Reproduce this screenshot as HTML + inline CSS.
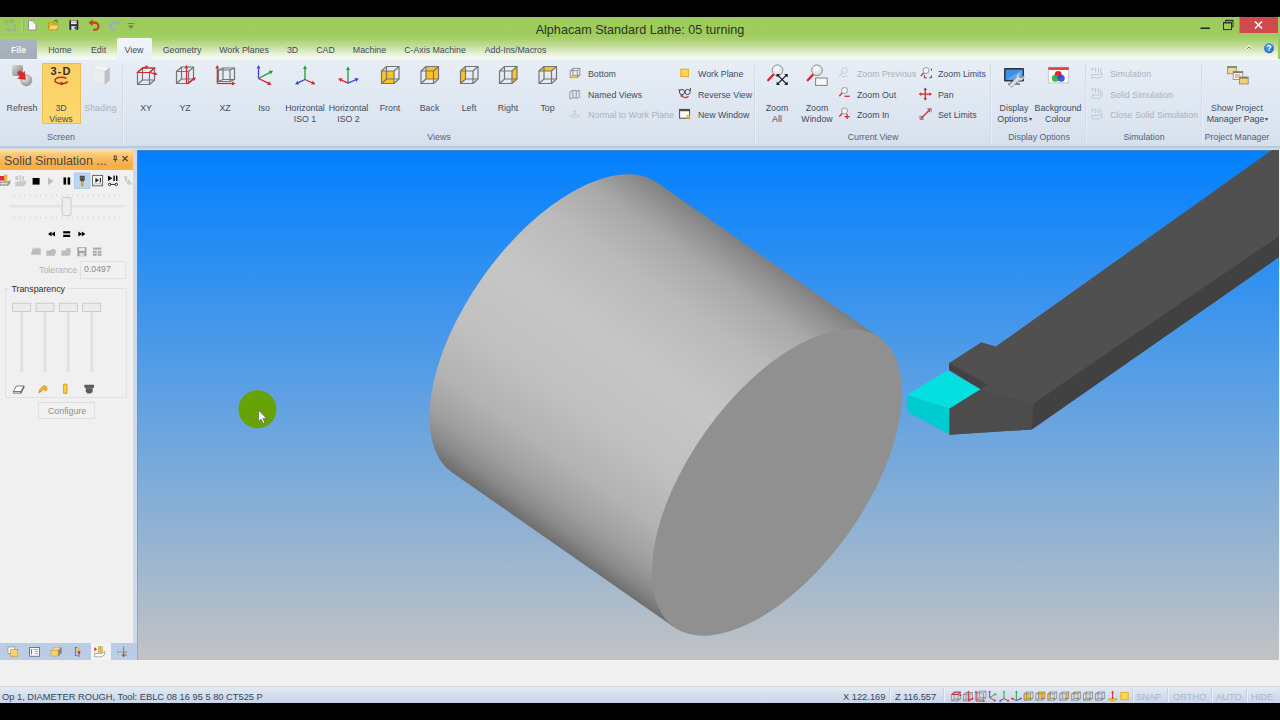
<!DOCTYPE html>
<html lang="en">
<head>
<meta charset="utf-8">
<title>Alphacam Standard Lathe: 05 turning</title>
<style>
html,body{margin:0;padding:0;}
body{width:1280px;height:720px;overflow:hidden;position:relative;background:#000;font-family:"Liberation Sans",sans-serif;font-size:8.8px;color:#3b4a5e;}
.abs{position:absolute;}
#titlebar{left:0;top:17px;width:1280px;height:43px;background:linear-gradient(to bottom,#9dcb5b 0px,#9fcc5f 18px,#a8d06d 22px,#c2dd98 29px,#e3efd2 36px,#f6faf1 41px,#f4f7f4 43px);}
#rightedge{left:1278px;top:17px;width:2px;height:42px;background:#9dcb5b;}
#title{left:0;width:1280px;top:22.5px;text-align:center;font-size:12.6px;color:#2a3620;}
#ribbon{left:0;top:60px;width:1280px;height:86px;background:linear-gradient(to bottom,#e8eef6 0,#e1e9f3 30px,#dce5f0 60px,#d6e0ec 86px);}
#ribbonline{left:0;top:146px;width:1280px;height:4px;background:linear-gradient(to bottom,#b4c1d4 0,#c3cfdf 40%,#d3dde9 100%);}
.tab{position:absolute;top:45px;font-size:8.8px;line-height:11px;color:#3e4c60;white-space:nowrap;transform:translateX(-50%);}
#filetab{left:0;top:38.5px;width:37px;height:20.5px;background:linear-gradient(#aab5c2,#a3aebb);color:#f4f6f8;font-size:8.8px;font-weight:bold;text-align:center;line-height:22px;}
#viewtab{left:117px;top:38px;width:35px;height:23px;background:linear-gradient(#f2f6fb,#e9eff7);border-radius:2px 2px 0 0;}
.big{position:absolute;top:103px;font-size:8.8px;line-height:11px;text-align:center;white-space:nowrap;transform:translateX(-50%);color:#3e4c60;}
.sm{position:absolute;font-size:8.8px;line-height:11px;white-space:nowrap;color:#3e4c60;}
.dis{color:#a9b2be;}
.grp{position:absolute;top:131.5px;font-size:8.8px;line-height:11px;white-space:nowrap;transform:translateX(-50%);color:#53617a;}
.sep{position:absolute;top:64px;width:1px;height:80px;background:#d2dbe8;box-shadow:1px 0 0 #e9eff7;}
#btn3d{left:42px;top:63px;width:39px;height:61px;background:linear-gradient(#fbd166,#fdd870);border:1px solid #ebbd52;box-sizing:border-box;}
#leftbg{left:0;top:150px;width:137px;height:510px;background:#cfdae8;}
#panel{left:0;top:149px;width:133px;height:494px;background:#f0f0f0;overflow:hidden;}
#phead{left:0;top:0;width:133px;height:21px;background:linear-gradient(to bottom,#fde3ae 0,#fcc66f 30%,#f9ad45 75%,#f9b04c 100%);}
#ptitle{left:4px;top:4.5px;font-size:12.4px;line-height:15px;color:#4a4a4a;white-space:nowrap;}
#ptabs{left:0;top:643px;width:137px;height:17px;background:#bccbe6;}
#ptabact{left:91px;top:643px;width:20px;height:17px;background:#f3f4f7;}
.ptxt{position:absolute;font-size:8.8px;line-height:11px;white-space:nowrap;}
#vp{left:137px;top:150px;}
#vpright{left:1279px;top:150px;width:1px;height:510px;background:#f4f6f8;}
#under{left:0;top:660px;width:1280px;height:27px;background:#f0f0f0;}
#statusline{left:0;top:686px;width:1280px;height:1px;background:#d3d6de;}
#status{left:0;top:687px;width:1280px;height:16px;background:linear-gradient(to bottom,#e4ebf5 0,#d5dfed 50%,#c8d5e7 100%);}
.st{position:absolute;top:692px;font-size:9.3px;line-height:11px;color:#37455a;white-space:nowrap;}
.stsep{position:absolute;top:688px;width:1px;height:14px;background:#c6d1e2;box-shadow:1px 0 0 #eaf0f8;}
#botblack{left:0;top:703px;width:1280px;height:17px;background:#000;}
</style>

</head>
<body>
<div id="titlebar" class="abs"></div>
<div id="rightedge" class="abs"></div>
<div id="title" class="abs">Alphacam Standard Lathe: 05 turning</div>
<div id="filetab" class="abs">File</div>
<div id="viewtab" class="abs"></div>
<div id="ribbon" class="abs"></div>
<div id="ribbonline" class="abs"></div>

<!-- TABS -->
<div class="tab" style="left:60px">Home</div>
<div class="tab" style="left:98.5px">Edit</div>
<div class="tab" style="left:134px">View</div>
<div class="tab" style="left:182px">Geometry</div>
<div class="tab" style="left:244px">Work Planes</div>
<div class="tab" style="left:292.5px">3D</div>
<div class="tab" style="left:325.5px">CAD</div>
<div class="tab" style="left:369.5px">Machine</div>
<div class="tab" style="left:435px">C-Axis Machine</div>
<div class="tab" style="left:515.5px">Add-Ins/Macros</div>

<!-- RIBBON -->
<div id="btn3d" class="abs"></div>
<div class="big" style="left:22px">Refresh</div>
<div class="big" style="left:61px">3D<br>Views</div>
<div class="big dis" style="left:100.5px">Shading</div>
<div class="big" style="left:146px">XY</div>
<div class="big" style="left:185px">YZ</div>
<div class="big" style="left:225px">XZ</div>
<div class="big" style="left:264px">Iso</div>
<div class="big" style="left:305px">Horizontal<br>ISO 1</div>
<div class="big" style="left:348.5px">Horizontal<br>ISO 2</div>
<div class="big" style="left:390px">Front</div>
<div class="big" style="left:429.5px">Back</div>
<div class="big" style="left:469px">Left</div>
<div class="big" style="left:508px">Right</div>
<div class="big" style="left:547.5px">Top</div>
<div class="big" style="left:777px">Zoom<br>All</div>
<div class="big" style="left:817px">Zoom<br>Window</div>
<div class="big" style="left:1014px">Display<br>Options<span style="font-size:6px;position:relative;top:-1.5px;left:1px">&#9662;</span></div>
<div class="big" style="left:1058px">Background<br>Colour</div>
<div class="big" style="left:1237px">Show Project<br>Manager Page<span style="font-size:6px;position:relative;top:-1.5px;left:1px">&#9662;</span></div>

<div class="sm" style="left:588px;top:69px">Bottom</div>
<div class="sm" style="left:588px;top:90px">Named Views</div>
<div class="sm dis" style="left:588px;top:110px">Normal to Work Plane</div>
<div class="sm" style="left:698px;top:69px">Work Plane</div>
<div class="sm" style="left:698px;top:90px">Reverse View</div>
<div class="sm" style="left:698px;top:110px">New Window</div>
<div class="sm dis" style="left:857px;top:69px">Zoom Previous</div>
<div class="sm" style="left:857px;top:90px">Zoom Out</div>
<div class="sm" style="left:857px;top:110px">Zoom In</div>
<div class="sm" style="left:938px;top:69px">Zoom Limits</div>
<div class="sm" style="left:938px;top:90px">Pan</div>
<div class="sm" style="left:938px;top:110px">Set Limits</div>
<div class="sm dis" style="left:1110px;top:69px">Simulation</div>
<div class="sm dis" style="left:1110px;top:90px">Solid Simulation</div>
<div class="sm dis" style="left:1110px;top:110px">Close Solid Simulation</div>

<div class="grp" style="left:61px">Screen</div>
<div class="grp" style="left:439px">Views</div>
<div class="grp" style="left:873px">Current View</div>
<div class="grp" style="left:1039px">Display Options</div>
<div class="grp" style="left:1144px">Simulation</div>
<div class="grp" style="left:1237px">Project Manager</div>

<div class="sep" style="left:122px"></div>
<div class="sep" style="left:754px"></div>
<div class="sep" style="left:990px"></div>
<div class="sep" style="left:1085px"></div>
<div class="sep" style="left:1201px"></div>

<!-- PANEL -->
<div id="leftbg" class="abs"></div>
<div id="panel" class="abs">
  <div id="phead" class="abs"></div>
  <div id="ptitle" class="abs">Solid Simulation ...</div>
  <div class="ptxt" style="left:39px;top:116px;color:#b2b2b2">Tolerance</div>
  <div class="abs" style="left:80px;top:112px;width:46px;height:18px;box-sizing:border-box;border:1px solid #e2e2e2;background:#f1f1f1"></div>
  <div class="ptxt" style="left:84px;top:115px;color:#8c8c8c">0.0497</div>
  <div class="abs" style="left:5px;top:139px;width:122px;height:110px;box-sizing:border-box;border:1px solid #e1e1e1"></div>
  <div class="ptxt" style="left:9px;top:134.5px;color:#2e2e2e;background:#f0f0f0;padding:0 2.5px">Transparency</div>
  <div class="abs" style="left:38px;top:253px;width:57px;height:17px;box-sizing:border-box;border:1px solid #dedede;background:#f1f1f1"></div>
  <div class="ptxt" style="left:48px;top:257px;color:#8e8e8e">Configure</div>
</div>
<div id="ptabs" class="abs"></div>
<div id="ptabact" class="abs"></div>

<!-- VIEWPORT -->
<svg id="vp" class="abs" width="1142" height="510" viewBox="137 150 1142 510">
  <defs>
    <linearGradient id="sky" x1="0" y1="0" x2="0" y2="1">
      <stop offset="0" stop-color="#0280ff"/>
      <stop offset="1" stop-color="#c2c3c4"/>
    </linearGradient>
<!--CYLGRAD-->
    <linearGradient id="cyl" gradientUnits="userSpaceOnUse" x1="879.8" y1="337.8" x2="674.2" y2="627.2">
      <stop offset="0" stop-color="#7e7e7e"/>
      <stop offset="0.04" stop-color="#8e8e8e"/>
      <stop offset="0.12" stop-color="#a8a8a8"/>
      <stop offset="0.25" stop-color="#bababa"/>
      <stop offset="0.45" stop-color="#c6c6c6"/>
      <stop offset="0.65" stop-color="#c0c0c0"/>
      <stop offset="0.8" stop-color="#b2b2b2"/>
      <stop offset="0.9" stop-color="#9e9e9e"/>
      <stop offset="0.96" stop-color="#888888"/>
      <stop offset="1" stop-color="#707070"/>
    </linearGradient>
<!--/CYLGRAD-->
  </defs>
  <rect x="137" y="150" width="1142" height="510" fill="url(#sky)"/>
  <rect x="137" y="150" width="1142" height="1" fill="#6f86a6" fill-opacity="0.55"/><rect x="137" y="150" width="1" height="510" fill="#6f86a6" fill-opacity="0.45"/>
<!--CYL-->
  <g id="cylinder">
    <path d="M879.8 337.8 L657.3 182.8 A177.5 88.0 -54.6 0 0 451.7 472.2 L674.2 627.2 Z" fill="url(#cyl)"/>
    <path d="M879.8 337.8 A177.5 88 -54.6 0 0 674.2 627.2 A177.5 88 -54.6 0 0 879.8 337.8 Z" fill="#909090"/>
  </g>
<!--/CYL-->
  <g id="tool">
    <polygon points="949.2,362.9 981.3,342.2 995.8,346.5 1280,144.3 1280,256.4 1031.7,429.4 949.2,434.7 949.2,408.7 980.5,389.3 949.2,370" fill="#505050"/>
    <polygon points="1033.3,403.4 1280,235.5 1280,256.4 1031.7,429.4" fill="#414141"/>
    <polygon points="949.2,408.7 980.5,389.3 1033.3,403.4 1031.7,429.4 949.2,434.7" fill="#4c4c4c"/>
    <polygon points="949.2,362.9 949.2,370 980.5,389.3 987.5,384.8" fill="#434343"/>
    <polygon points="906.9,395 947.2,370.6 980.5,389.3 949.4,408.4" fill="#04dfe0"/>
    <polygon points="906.9,395 949.4,408.4 949.4,434.4 907.8,411.9" fill="#00cbd0"/>
  </g>
  <g id="cursor">
    <circle cx="257.5" cy="409.3" r="19" fill="#68a306"/>
    <path d="M258.6 410.2 l0 11.4 l2.6 -2.5 l1.9 4.4 l1.7 -0.8 l-1.9 -4.3 l3.6 0 z" fill="#fff" stroke="#444" stroke-width="0.5"/>
  </g>
</svg>

<div id="vpright" class="abs"></div>
<div id="under" class="abs"></div>
<div id="statusline" class="abs"></div>
<div id="status" class="abs"></div>
<div class="st" style="left:2px">Op 1, DIAMETER ROUGH, Tool: EBLC 08 16 95 5 80 CT525 P</div>
<div class="st" style="left:843px">X 122.169</div>
<div class="st" style="left:895px">Z 116.557</div>
<div class="st" style="left:1136px;color:#a9b7cb">SNAP</div>
<div class="st" style="left:1173px;color:#a9b7cb">ORTHO</div>
<div class="st" style="left:1216px;color:#a9b7cb">AUTO</div>
<div class="st" style="left:1251px;color:#a9b7cb">HIDE</div>
<div class="stsep" style="left:889px"></div>
<div class="stsep" style="left:943px"></div>
<div class="stsep" style="left:1132px"></div>
<div class="stsep" style="left:1167px"></div>
<div class="stsep" style="left:1211px"></div>
<div class="stsep" style="left:1246px"></div>
<div id="botblack" class="abs"></div>
<!--ICONS-->
<svg id="icons" class="abs" style="left:0;top:0" width="1280" height="720" viewBox="0 0 1280 720">
<defs>
<linearGradient id="gGrey" x1="0" y1="0" x2="1" y2="1"><stop offset="0" stop-color="#dcdcdc"/><stop offset="1" stop-color="#7c7c7c"/></linearGradient>
<radialGradient id="gSph" cx="0.35" cy="0.3" r="0.8"><stop offset="0" stop-color="#f2f2f2"/><stop offset="1" stop-color="#8a8a8a"/></radialGradient>
<radialGradient id="gLens" cx="0.4" cy="0.35" r="0.7"><stop offset="0" stop-color="#ffffff"/><stop offset="1" stop-color="#cfd3d8"/></radialGradient>
<radialGradient id="gHelp" cx="0.4" cy="0.3" r="0.8"><stop offset="0" stop-color="#5aa0ee"/><stop offset="1" stop-color="#1c5fc4"/></radialGradient>
</defs>
<rect x="1239.5" y="17" width="38.5" height="16" fill="#cf494e"/>
<path d="M1255 21.5 L1262 28.5 M1262 21.5 L1255 28.5" stroke="#fff" stroke-width="1.7"/>
<rect x="1200.5" y="27.5" width="9.5" height="1.5" fill="#1e2a12"/>
<path d="M1225.5 21.8 V20.3 H1233 V27 H1231.6" fill="none" stroke="#2a3620" stroke-width="1"/>
<rect x="1225" y="20" width="8.3" height="1.2" fill="#2a3620"/>
<rect x="1223.5" y="22.6" width="8" height="7" fill="none" stroke="#2a3620" stroke-width="1"/>
<rect x="1223" y="22.1" width="9" height="1.3" fill="#2a3620"/>
<path d="M1246 49.6 L1249 46.6 L1252 49.6" fill="none" stroke="#ffffff" stroke-width="2.6" stroke-linejoin="round"/>
<path d="M1246.3 49.5 L1249 46.8 L1251.7 49.5" fill="none" stroke="#55634a" stroke-width="1"/>
<circle cx="1269" cy="48.3" r="5" fill="url(#gHelp)"/>
<text x="1269" y="51.4" font-size="8.5" font-weight="bold" fill="#fff" text-anchor="middle" font-family="Liberation Sans, sans-serif">?</text>
<g opacity="0.55"><path d="M6 26 v-5 h7 l-2 -2 m2 2 l-2 2" fill="none" stroke="#8aa86c" stroke-width="1.6"/><path d="M15 24 v6 h-8 l2 2 m-2 -2 l2 -2" fill="none" stroke="#9aa6a0" stroke-width="1.8"/></g>
<rect x="21.8" y="21" width="1" height="10" fill="#c3dd98"/><rect x="22.8" y="21" width="1" height="10" fill="#8db852"/>
<path d="M28.5 20.5 h5 l2.5 2.5 v7 h-7.5 z" fill="#f6f6f6" stroke="#8c8c8c" stroke-width="0.9"/><path d="M33.5 20.5 v2.5 h2.5" fill="#dcdcdc" stroke="#8c8c8c" stroke-width="0.7"/>
<path d="M48.5 22.5 h3.5 l1 1.2 h4 v6 h-8.5 z" fill="#e9b736" stroke="#b78a1e" stroke-width="0.7"/><path d="M48.5 29.7 l2 -4.6 h8 l-2 4.6 z" fill="#fbd965" stroke="#c79a28" stroke-width="0.7"/><path d="M53.5 21.5 l3 -1.5 l1 2.5" fill="none" stroke="#7a4a20" stroke-width="1"/>
<rect x="69.3" y="20.3" width="9" height="9.6" rx="0.8" fill="#252a40"/><rect x="71" y="20.6" width="5.6" height="3.6" fill="#f4f0f0"/><rect x="71" y="21.6" width="5.6" height="1" fill="#e58c8c"/><rect x="71.3" y="26" width="5" height="3.9" fill="#d8dadf"/><rect x="74.6" y="26.6" width="1.2" height="2.6" fill="#252a40"/>
<path d="M91.5 22.6 h3.4 a3.6 3.6 0 0 1 0 7.2 h-1.8" fill="none" stroke="#d2391c" stroke-width="2.1"/><polygon points="88.6,22.8 92.6,19.6 92.6,26" fill="#d2391c"/>
<path d="M117.6 22.6 h-3.4 a3.6 3.6 0 0 0 0 7.2 h1.8" fill="none" stroke="#93adc9" stroke-width="2.1"/><polygon points="120.5,22.8 116.5,19.6 116.5,26" fill="#93adc9"/>
<rect x="127.5" y="23" width="7" height="1" fill="#6d8b4a"/><polygon points="127.8,25.6 134.2,25.6 131,29" fill="#6d8b4a"/>
<rect x="12" y="65" width="11" height="11" rx="2.2" fill="url(#gGrey)"/>
<circle cx="26.3" cy="80.3" r="5.6" fill="url(#gSph)" stroke="#8e8e8e" stroke-width="0.5"/>
<polygon points="17.5,72.5 20,70.5 22.6,73.2 24.6,71.4 25.6,79.6 17.6,78.4 19.8,76.4" fill="#e0282e" stroke="#b81c22" stroke-width="0.4"/>
<text x="61" y="75.2" font-size="11" font-weight="bold" fill="#3a2d2d" text-anchor="middle" letter-spacing="1.1" font-family="Liberation Sans, sans-serif">3-D</text>
<path d="M66.5 78.3 a6.6 3.3 0 1 0 1.2 3.2" fill="none" stroke="#c3271c" stroke-width="1.5"/>
<polygon points="60.5,81.6 64.8,83.6 60.8,85.4" fill="#c3271c"/>
<polygon points="90.9,67.6 100,65.3 109.9,67.6 104.6,71.2" fill="#f4f4f4" stroke="#dedede" stroke-width="0.4"/>
<polygon points="90.9,67.6 104.6,71.2 104.6,84.9 91.9,80.8" fill="#ececec" stroke="#dcdcdc" stroke-width="0.4"/>
<polygon points="104.6,71.2 109.9,67.6 109.9,80.3 104.6,84.9" fill="#bcc0c7"/>
<polygon points="142.5,68.0 154.5,68.0 154.5,80.0 142.5,80.0" fill="none" stroke="#757575" stroke-width="1.2"/>
<polygon points="137.5,72.5 149.5,72.5 149.5,84.5 137.5,84.5" fill="none" stroke="#757575" stroke-width="1.2"/>
<line x1="137.5" y1="72.5" x2="142.5" y2="68.0" stroke="#757575" stroke-width="1.2" />
<line x1="149.5" y1="72.5" x2="154.5" y2="68.0" stroke="#757575" stroke-width="1.2" />
<line x1="149.5" y1="84.5" x2="154.5" y2="80.0" stroke="#757575" stroke-width="1.2" />
<line x1="137.5" y1="84.5" x2="142.5" y2="80.0" stroke="#757575" stroke-width="1.2" />
<polygon points="137.5,72.5 142.5,68 154.5,68 149.5,72.5" fill="none" stroke="#d8232a" stroke-width="1.1"/>
<line x1="149.5" y1="72.5" x2="154.2" y2="73.68" stroke="#d8232a" stroke-width="1.2" />
<polygon points="157.5,74.5 153.75,75.49 154.66,71.86" fill="#d8232a"/>
<line x1="142.5" y1="68" x2="145.65" y2="66.95" stroke="#d8232a" stroke-width="1.2" />
<polygon points="148.5,66 146.18,68.51 145.13,65.38" fill="#d8232a"/>
<polygon points="181.5,67.0 193.5,67.0 193.5,79.0 181.5,79.0" fill="none" stroke="#757575" stroke-width="1.2"/>
<polygon points="176.5,71.5 188.5,71.5 188.5,83.5 176.5,83.5" fill="none" stroke="#757575" stroke-width="1.2"/>
<line x1="176.5" y1="71.5" x2="181.5" y2="67.0" stroke="#757575" stroke-width="1.2" />
<line x1="188.5" y1="71.5" x2="193.5" y2="67.0" stroke="#757575" stroke-width="1.2" />
<line x1="188.5" y1="83.5" x2="193.5" y2="79.0" stroke="#757575" stroke-width="1.2" />
<line x1="176.5" y1="83.5" x2="181.5" y2="79.0" stroke="#757575" stroke-width="1.2" />
<line x1="186.5" y1="84" x2="186.5" y2="68.6" stroke="#d8232a" stroke-width="1.2" />
<polygon points="186.5,65 188.48,68.6 184.52,68.6" fill="#d8232a"/>
<line x1="186.5" y1="84" x2="193.19" y2="79.42" stroke="#d8232a" stroke-width="1.2" />
<polygon points="196,77.5 194.25,80.96 192.14,77.88" fill="#d8232a"/>
<polygon points="223.0,68 234.5,68 234.5,79.5 223.0,79.5" fill="none" stroke="#757575" stroke-width="1.2"/>
<polygon points="218.5,70 230.0,70 230.0,81.5 218.5,81.5" fill="none" stroke="#757575" stroke-width="1.2"/>
<line x1="218.5" y1="70" x2="223.0" y2="68" stroke="#757575" stroke-width="1.2" />
<line x1="230.0" y1="70" x2="234.5" y2="68" stroke="#757575" stroke-width="1.2" />
<line x1="230.0" y1="81.5" x2="234.5" y2="79.5" stroke="#757575" stroke-width="1.2" />
<line x1="218.5" y1="81.5" x2="223.0" y2="79.5" stroke="#757575" stroke-width="1.2" />
<line x1="217.3" y1="83.5" x2="217.3" y2="68.6" stroke="#d8232a" stroke-width="1.2" />
<polygon points="217.3,65 219.28,68.6 215.32,68.6" fill="#d8232a"/>
<line x1="217.3" y1="83.5" x2="231.9" y2="83.5" stroke="#d8232a" stroke-width="1.2" />
<polygon points="235.5,83.5 231.9,85.48 231.9,81.52" fill="#d8232a"/>
<line x1="258.5" y1="78.5" x2="258.5" y2="68.6" stroke="#3146d8" stroke-width="1.3" />
<polygon points="258.5,65 260.48,68.6 256.52,68.6" fill="#3146d8"/>
<line x1="258.5" y1="78.5" x2="269.64" y2="72.58" stroke="#1fa12b" stroke-width="1.3" />
<polygon points="273,70.8 270.62,74.43 268.66,70.74" fill="#1fa12b"/>
<line x1="258.5" y1="78.5" x2="268.08" y2="83.14" stroke="#d8232a" stroke-width="1.3" />
<polygon points="271.5,84.8 267.17,85.02 268.99,81.26" fill="#d8232a"/>
<line x1="305" y1="79.5" x2="305.0" y2="68.9" stroke="#1fa12b" stroke-width="1.3" />
<polygon points="305,65.3 306.98,68.9 303.02,68.9" fill="#1fa12b"/>
<line x1="305" y1="79.5" x2="298.43" y2="82.66" stroke="#3146d8" stroke-width="1.3" />
<polygon points="295,84.3 297.52,80.77 299.33,84.54" fill="#3146d8"/>
<line x1="305" y1="79.5" x2="312.04" y2="82.72" stroke="#d8232a" stroke-width="1.3" />
<polygon points="315.5,84.3 311.18,84.62 312.91,80.82" fill="#d8232a"/>
<line x1="348" y1="83.2" x2="348.0" y2="69.9" stroke="#1fa12b" stroke-width="1.3" />
<polygon points="348,66.3 349.98,69.9 346.02,69.9" fill="#1fa12b"/>
<line x1="348" y1="83.2" x2="341.63" y2="80.14" stroke="#d8232a" stroke-width="1.3" />
<polygon points="338.2,78.5 342.53,78.26 340.72,82.03" fill="#d8232a"/>
<line x1="348" y1="83.2" x2="355.32" y2="80.02" stroke="#3146d8" stroke-width="1.3" />
<polygon points="358.8,78.5 356.15,81.93 354.48,78.1" fill="#3146d8"/>
<polygon points="381.5,71 394.0,71 394.0,83.5 381.5,83.5" fill="#fcc41c"/>
<polygon points="386.5,66.5 399.0,66.5 399.0,79.0 386.5,79.0" fill="none" stroke="#757575" stroke-width="1.2"/>
<polygon points="381.5,71 394.0,71 394.0,83.5 381.5,83.5" fill="none" stroke="#757575" stroke-width="1.2"/>
<line x1="381.5" y1="71" x2="386.5" y2="66.5" stroke="#757575" stroke-width="1.2" />
<line x1="394.0" y1="71" x2="399.0" y2="66.5" stroke="#757575" stroke-width="1.2" />
<line x1="394.0" y1="83.5" x2="399.0" y2="79.0" stroke="#757575" stroke-width="1.2" />
<line x1="381.5" y1="83.5" x2="386.5" y2="79.0" stroke="#757575" stroke-width="1.2" />
<polygon points="426.0,66.5 438.5,66.5 438.5,79.0 426.0,79.0" fill="#fcc41c"/>
<polygon points="426.0,66.5 438.5,66.5 438.5,79.0 426.0,79.0" fill="none" stroke="#757575" stroke-width="1.2"/>
<polygon points="421.0,71 433.5,71 433.5,83.5 421.0,83.5" fill="none" stroke="#757575" stroke-width="1.2"/>
<line x1="421.0" y1="71" x2="426.0" y2="66.5" stroke="#757575" stroke-width="1.2" />
<line x1="433.5" y1="71" x2="438.5" y2="66.5" stroke="#757575" stroke-width="1.2" />
<line x1="433.5" y1="83.5" x2="438.5" y2="79.0" stroke="#757575" stroke-width="1.2" />
<line x1="421.0" y1="83.5" x2="426.0" y2="79.0" stroke="#757575" stroke-width="1.2" />
<polygon points="460.5,71 465.5,66.5 465.5,79.0 460.5,83.5" fill="#fcc41c"/>
<polygon points="465.5,66.5 478.0,66.5 478.0,79.0 465.5,79.0" fill="none" stroke="#757575" stroke-width="1.2"/>
<polygon points="460.5,71 473.0,71 473.0,83.5 460.5,83.5" fill="none" stroke="#757575" stroke-width="1.2"/>
<line x1="460.5" y1="71" x2="465.5" y2="66.5" stroke="#757575" stroke-width="1.2" />
<line x1="473.0" y1="71" x2="478.0" y2="66.5" stroke="#757575" stroke-width="1.2" />
<line x1="473.0" y1="83.5" x2="478.0" y2="79.0" stroke="#757575" stroke-width="1.2" />
<line x1="460.5" y1="83.5" x2="465.5" y2="79.0" stroke="#757575" stroke-width="1.2" />
<polygon points="512.0,71 517.0,66.5 517.0,79.0 512.0,83.5" fill="#fcc41c"/>
<polygon points="504.5,66.5 517.0,66.5 517.0,79.0 504.5,79.0" fill="none" stroke="#757575" stroke-width="1.2"/>
<polygon points="499.5,71 512.0,71 512.0,83.5 499.5,83.5" fill="none" stroke="#757575" stroke-width="1.2"/>
<line x1="499.5" y1="71" x2="504.5" y2="66.5" stroke="#757575" stroke-width="1.2" />
<line x1="512.0" y1="71" x2="517.0" y2="66.5" stroke="#757575" stroke-width="1.2" />
<line x1="512.0" y1="83.5" x2="517.0" y2="79.0" stroke="#757575" stroke-width="1.2" />
<line x1="499.5" y1="83.5" x2="504.5" y2="79.0" stroke="#757575" stroke-width="1.2" />
<polygon points="539.0,71 551.5,71 556.5,66.5 544.0,66.5" fill="#fcc41c"/>
<polygon points="544.0,66.5 556.5,66.5 556.5,79.0 544.0,79.0" fill="none" stroke="#757575" stroke-width="1.2"/>
<polygon points="539.0,71 551.5,71 551.5,83.5 539.0,83.5" fill="none" stroke="#757575" stroke-width="1.2"/>
<line x1="539.0" y1="71" x2="544.0" y2="66.5" stroke="#757575" stroke-width="1.2" />
<line x1="551.5" y1="71" x2="556.5" y2="66.5" stroke="#757575" stroke-width="1.2" />
<line x1="551.5" y1="83.5" x2="556.5" y2="79.0" stroke="#757575" stroke-width="1.2" />
<line x1="539.0" y1="83.5" x2="544.0" y2="79.0" stroke="#757575" stroke-width="1.2" />
<polygon points="572.9,68.4 579.9,68.4 579.9,75.4 572.9,75.4" fill="none" stroke="#7f7f7f" stroke-width="0.8"/>
<polygon points="570.3,70.6 577.3,70.6 577.3,77.6 570.3,77.6" fill="none" stroke="#7f7f7f" stroke-width="0.8"/>
<line x1="570.3" y1="70.6" x2="572.9" y2="68.4" stroke="#7f7f7f" stroke-width="0.8" />
<line x1="577.3" y1="70.6" x2="579.9" y2="68.4" stroke="#7f7f7f" stroke-width="0.8" />
<line x1="577.3" y1="77.6" x2="579.9" y2="75.4" stroke="#7f7f7f" stroke-width="0.8" />
<line x1="570.3" y1="77.6" x2="572.9" y2="75.4" stroke="#7f7f7f" stroke-width="0.8" />
<rect x="570.8" y="75.6" width="6" height="2" fill="#fcc41c"/>
<path d="M569.8 92 l3 -1.6 v7.4 l-3 1 z M572.8 90.4 h3.4 v7.4 h-3.4 M576.2 91.6 l3 -1.6 v7.6 l-3 0.8" fill="none" stroke="#8a8e96" stroke-width="0.9"/>
<path d="M575 110.5 v5.4 M573.3 112.2 l1.7 -1.9 l1.7 1.9" fill="none" stroke="#c3c9d2" stroke-width="1"/><polygon points="569.8,116.3 575,114.4 580.2,116.3 575,118.2" fill="none" stroke="#c3c9d2" stroke-width="0.9"/>
<rect x="680.8" y="69.2" width="7.6" height="7.4" fill="#fdd651" stroke="#e2aa26" stroke-width="1"/>
<circle cx="682" cy="92" r="2.6" fill="none" stroke="#3a3a3a" stroke-width="0.9"/><circle cx="687.6" cy="92" r="2.6" fill="none" stroke="#3a3a3a" stroke-width="0.9"/><path d="M679.4 91 l-0.6 -2 M690.2 91 l0.4 -3" stroke="#3a3a3a" stroke-width="0.9" fill="none"/><path d="M681.4 95.6 q3.4 3.6 7.2 0.6" fill="none" stroke="#d8232a" stroke-width="1.1"/><polygon points="680.4,94.2 683.2,95 681,97.4" fill="#d8232a"/>
<rect x="679.6" y="109.4" width="10" height="8.8" fill="#fbfbfb" stroke="#4a4a4a" stroke-width="1"/><rect x="679.6" y="109.4" width="10" height="1.8" fill="#4a4a4a"/><rect x="686.4" y="114.8" width="3.4" height="3.6" fill="#f3c21e"/>
<line x1="773.8" y1="74.24" x2="768.2" y2="80.2" stroke="#d8262c" stroke-width="2.4" stroke-linecap="round"/>
<circle cx="777.5" cy="70.3" r="5.4" fill="url(#gLens)" stroke="#8c9096" stroke-width="1"/>
<path d="M777.2 74.6 L787 84.4 M787 74.6 L777.2 84.4" stroke="#1a1a1a" stroke-width="1.3"/>
<polygon points="776.6,74 780.0,74 776.6,77.4" fill="#1a1a1a"/>
<polygon points="787.6,74 784.2,74 787.6,77.4" fill="#1a1a1a"/>
<polygon points="776.6,85 780.0,85 776.6,81.6" fill="#1a1a1a"/>
<polygon points="787.6,85 784.2,85 787.6,81.6" fill="#1a1a1a"/>
<line x1="813.32" y1="74.26" x2="807.8" y2="80.2" stroke="#d8262c" stroke-width="2.4" stroke-linecap="round"/>
<circle cx="817" cy="70.3" r="5.4" fill="url(#gLens)" stroke="#8c9096" stroke-width="1"/>
<rect x="815.6" y="78" width="11.6" height="7.4" fill="#f4f6f9" stroke="#7d8187" stroke-width="1"/>
<line x1="842.3" y1="72.7" x2="839.3" y2="76.1" stroke="#c9ced6" stroke-width="1.3" />
<circle cx="844.5" cy="70.5" r="3" fill="#e6ebf2" stroke="#c2c7cf" stroke-width="0.9"/>
<path d="M842 76.5 h5.5" stroke="#c9ced6" stroke-width="1.1"/>
<line x1="842.3" y1="92.7" x2="839.3" y2="96.1" stroke="#d8262c" stroke-width="1.3" />
<circle cx="844.5" cy="90.5" r="3" fill="#f2f4f7" stroke="#8c9096" stroke-width="0.9"/>
<path d="M844.6 96.3 h5" stroke="#d8262c" stroke-width="1.3"/>
<line x1="842.3" y1="113.2" x2="839.3" y2="116.6" stroke="#d8262c" stroke-width="1.3" />
<circle cx="844.5" cy="111" r="3" fill="#f2f4f7" stroke="#8c9096" stroke-width="0.9"/>
<path d="M844.6 116.6 h5 M847.1 114.1 v5" stroke="#d8262c" stroke-width="1.3"/>
<line x1="923.8" y1="72.7" x2="920.8" y2="76.1" stroke="#d8262c" stroke-width="1.3" />
<circle cx="926" cy="70.5" r="3" fill="#f2f4f7" stroke="#8c9096" stroke-width="0.9"/>
<path d="M924.4 75.2 v2.6 h2.4 M931.4 70.6 v-2 M929.4 77.8 h2 v-2.4" fill="none" stroke="#3c3c3c" stroke-width="0.9"/>
<path d="M925.3 88.6 v11 M919.8 94.1 h11" stroke="#d8262c" stroke-width="1.3"/>
<polygon points="925.3,87.6 923.4,90.0 927.1999999999999,90.0" fill="#d8262c"/>
<polygon points="925.3,100.6 923.4,98.19999999999999 927.1999999999999,98.19999999999999" fill="#d8262c"/>
<polygon points="918.8,94.1 921.1999999999999,92.19999999999999 921.1999999999999,96.0" fill="#d8262c"/>
<polygon points="931.8,94.1 929.4,92.19999999999999 929.4,96.0" fill="#d8262c"/>
<line x1="925.5" y1="114" x2="928.48" y2="111.02" stroke="#d8262c" stroke-width="1.3" />
<polygon points="930.6,108.9 929.65,112.19 927.31,109.85" fill="#d8262c"/>
<line x1="925.5" y1="114" x2="922.72" y2="116.78" stroke="#d8262c" stroke-width="1.3" />
<polygon points="920.6,118.9 921.55,115.61 923.89,117.95" fill="#d8262c"/>
<path d="M920 115.6 v3.8 h3.8 M927.4 108.6 h3.8 v3.8" fill="none" stroke="#6a6e76" stroke-width="0.8"/>
<rect x="1004" y="68" width="20" height="13.6" rx="1" fill="#2d3644"/><rect x="1005.6" y="69.6" width="16.8" height="10.2" fill="#3d8fe6"/><path d="M1005.6 79.8 l16.8 -10.2 v10.2 z" fill="#5aa6f2"/><rect x="1010.5" y="81.6" width="7" height="2" fill="#3a4250"/><rect x="1008" y="83.4" width="12" height="1.3" fill="#596271"/>
<path d="M1009 85 l7.6 -7.4 a3.6 3.6 0 0 1 4.6 -4.4 l-2.3 2.4 l0.6 2 l2 0.6 l2.3 -2.4 a3.6 3.6 0 0 1 -4.6 4.6 l-7.6 7.2 z" fill="#d9dde3" stroke="#868c96" stroke-width="0.6"/>
<rect x="1048.3" y="67.3" width="20.4" height="15.6" fill="#fdfdfd" stroke="#b9bec6" stroke-width="0.8"/><rect x="1048.3" y="67.3" width="20.4" height="2.6" fill="#e23a36"/>
<circle cx="1058.2" cy="74.4" r="3.5" fill="#e8242a"/><circle cx="1055.3" cy="78.3" r="3.5" fill="#24b03a" fill-opacity="0.9"/><circle cx="1061.2" cy="78.3" r="3.5" fill="#2448e0" fill-opacity="0.9"/>
<g fill="none" stroke="#c0c7d1" stroke-width="1"><path d="M1092 74.5 h7.5 l2.5 -1.6 v3.4 l-2.5 1.6 h-7.5 z"/><path d="M1095.6 67.5 v5 M1098.4 67.5 v5 M1100.8 68.5 v4"/><polygon points="1091.6,67.3 1094.4,69.1 1091.6,70.9" fill="#c0c7d1" stroke="none"/></g>
<g fill="none" stroke="#c0c7d1" stroke-width="1"><path d="M1092 95 h7.5 l2.5 -1.6 v3.4 l-2.5 1.6 h-7.5 z"/><path d="M1095.6 88 v5 M1098.4 88 v5 M1100.8 89 v4"/><polygon points="1091.6,87.8 1094.4,89.6 1091.6,91.4" fill="#c0c7d1" stroke="none"/></g>
<g fill="none" stroke="#c0c7d1" stroke-width="1"><path d="M1092 115.5 h7.5 l2.5 -1.6 v3.4 l-2.5 1.6 h-7.5 z"/><path d="M1095.6 108.5 v5 M1098.4 108.5 v5 M1100.8 109.5 v4"/><polygon points="1091.6,108.3 1094.4,110.1 1091.6,111.9" fill="#c0c7d1" stroke="none"/></g>
<rect x="1227.6" y="66.4" width="9" height="7.4" fill="#e9d79c" stroke="#8c8672" stroke-width="0.8"/><rect x="1227.6" y="66.4" width="9" height="1.6" fill="#8c8672"/>
<rect x="1233.2" y="71.4" width="9.6" height="8" fill="#f7f5ee" stroke="#8c8672" stroke-width="0.8"/><rect x="1233.2" y="71.4" width="9.6" height="1.6" fill="#7e7968"/><path d="M1235 75 h5.5 M1235 77 h4" stroke="#c8523c" stroke-width="0.7"/>
<rect x="1239.4" y="77" width="8.8" height="7" fill="#f0d36a" stroke="#8c8672" stroke-width="0.8"/><rect x="1239.4" y="77" width="8.8" height="1.6" fill="#7e7968"/>
<!--MORE-->
<path d="M113.8 156 h3 M114.3 156 v3.6 M116.3 156 v3.6 M113.2 159.6 h4.2 M115.3 159.6 v2.4" fill="none" stroke="#4a4a4a" stroke-width="1"/>
<path d="M122.6 156.2 l5 5 M127.6 156.2 l-5 5" stroke="#3c3c3c" stroke-width="1.2"/>
<rect x="0" y="176" width="4.4" height="4.6" fill="#e0303a"/><rect x="4.6" y="175" width="2.4" height="6.4" fill="#f2c81e" stroke="#a8881a" stroke-width="0.4"/><path d="M0 181.4 h8 l2.2 -1.6 v3.6 l-2.2 2.4 h-8 z" fill="#9a9a9a"/><path d="M0 183.6 h7.6 M2 185 l1.6 -3 M5 185 l1.6 -3" stroke="#f4f4f4" stroke-width="0.7"/>
<g fill="#c9c9c9"><rect x="15.4" y="176" width="3" height="4"/><rect x="19.6" y="175" width="1.6" height="6.6"/><rect x="22.4" y="176" width="1.6" height="5.4"/><path d="M15.4 181.6 h8.4 l2.4 -1.6 v3.6 l-2.4 2.6 h-8.4 z"/></g>
<rect x="32.6" y="178" width="7" height="6.6" fill="#000"/>
<polygon points="48,177.4 48,185 53.6,181.2" fill="#bcbcbc"/>
<rect x="63.5" y="177.4" width="2.6" height="7.2" fill="#000"/><rect x="67.6" y="177.4" width="2.6" height="7.2" fill="#000"/>
<rect x="74.6" y="173" width="15.4" height="15.4" fill="#b9d7f4" stroke="#a3c8ee" stroke-width="0.8"/>
<path d="M79.8 175.8 h5 v3.6 l-1 2 h-3 l-1 -2 z" fill="#4b4b4b"/><path d="M80.9 181.4 h2.8 v4.2 l-1.4 1.4 l-1.4 -1.4 z" fill="#eaa21e"/><path d="M81 177 v2 M83.6 177 v2" stroke="#8a8a8a" stroke-width="0.5"/>
<rect x="92.6" y="175.4" width="10" height="10.4" fill="#f7f7f7" stroke="#5a5a5a" stroke-width="0.9"/>
<polygon points="95.4,178 95.4,182.4 99,180.2" fill="#1e1e1e"/>
<rect x="99.8" y="178" width="1.1" height="4.4" fill="#1e1e1e"/><path d="M93.4 185 l2.4 -2.2 l2 1.4 l2 -1 l2.4 1.8" fill="none" stroke="#b0a090" stroke-width="0.8"/>
<polygon points="108,175.6 108,181 112.4,178.3" fill="#000"/>
<rect x="113.4" y="175.6" width="1.4" height="5.4" fill="#000"/><rect x="116" y="175.6" width="1.4" height="5.4" fill="#000"/>
<circle cx="109.6" cy="184.4" r="1.2" fill="none" stroke="#000" stroke-width="0.8"/><circle cx="116.4" cy="184.4" r="1.2" fill="none" stroke="#000" stroke-width="0.8"/><path d="M110.8 184.4 h4.4" stroke="#000" stroke-width="0.8"/>
<g fill="#cdcdcd"><path d="M124.2 176 h2.6 l0.6 5.6 h-2 z"/><path d="M127 182 l2 -3 l3 5.6 h-5 z"/></g>
<rect x="14.00" y="194" width="0.8" height="2.6" fill="#d6d6d6"/><rect x="14.00" y="216.4" width="0.8" height="2.6" fill="#d6d6d6"/>
<rect x="19.27" y="194" width="0.8" height="2.6" fill="#d6d6d6"/><rect x="19.27" y="216.4" width="0.8" height="2.6" fill="#d6d6d6"/>
<rect x="24.54" y="194" width="0.8" height="2.6" fill="#d6d6d6"/><rect x="24.54" y="216.4" width="0.8" height="2.6" fill="#d6d6d6"/>
<rect x="29.81" y="194" width="0.8" height="2.6" fill="#d6d6d6"/><rect x="29.81" y="216.4" width="0.8" height="2.6" fill="#d6d6d6"/>
<rect x="35.08" y="194" width="0.8" height="2.6" fill="#d6d6d6"/><rect x="35.08" y="216.4" width="0.8" height="2.6" fill="#d6d6d6"/>
<rect x="40.35" y="194" width="0.8" height="2.6" fill="#d6d6d6"/><rect x="40.35" y="216.4" width="0.8" height="2.6" fill="#d6d6d6"/>
<rect x="45.62" y="194" width="0.8" height="2.6" fill="#d6d6d6"/><rect x="45.62" y="216.4" width="0.8" height="2.6" fill="#d6d6d6"/>
<rect x="50.89" y="194" width="0.8" height="2.6" fill="#d6d6d6"/><rect x="50.89" y="216.4" width="0.8" height="2.6" fill="#d6d6d6"/>
<rect x="56.16" y="194" width="0.8" height="2.6" fill="#d6d6d6"/><rect x="56.16" y="216.4" width="0.8" height="2.6" fill="#d6d6d6"/>
<rect x="61.43" y="194" width="0.8" height="2.6" fill="#d6d6d6"/><rect x="61.43" y="216.4" width="0.8" height="2.6" fill="#d6d6d6"/>
<rect x="66.70" y="194" width="0.8" height="2.6" fill="#d6d6d6"/><rect x="66.70" y="216.4" width="0.8" height="2.6" fill="#d6d6d6"/>
<rect x="71.97" y="194" width="0.8" height="2.6" fill="#d6d6d6"/><rect x="71.97" y="216.4" width="0.8" height="2.6" fill="#d6d6d6"/>
<rect x="77.24" y="194" width="0.8" height="2.6" fill="#d6d6d6"/><rect x="77.24" y="216.4" width="0.8" height="2.6" fill="#d6d6d6"/>
<rect x="82.51" y="194" width="0.8" height="2.6" fill="#d6d6d6"/><rect x="82.51" y="216.4" width="0.8" height="2.6" fill="#d6d6d6"/>
<rect x="87.78" y="194" width="0.8" height="2.6" fill="#d6d6d6"/><rect x="87.78" y="216.4" width="0.8" height="2.6" fill="#d6d6d6"/>
<rect x="93.05" y="194" width="0.8" height="2.6" fill="#d6d6d6"/><rect x="93.05" y="216.4" width="0.8" height="2.6" fill="#d6d6d6"/>
<rect x="98.32" y="194" width="0.8" height="2.6" fill="#d6d6d6"/><rect x="98.32" y="216.4" width="0.8" height="2.6" fill="#d6d6d6"/>
<rect x="103.59" y="194" width="0.8" height="2.6" fill="#d6d6d6"/><rect x="103.59" y="216.4" width="0.8" height="2.6" fill="#d6d6d6"/>
<rect x="108.86" y="194" width="0.8" height="2.6" fill="#d6d6d6"/><rect x="108.86" y="216.4" width="0.8" height="2.6" fill="#d6d6d6"/>
<rect x="114.13" y="194" width="0.8" height="2.6" fill="#d6d6d6"/><rect x="114.13" y="216.4" width="0.8" height="2.6" fill="#d6d6d6"/>
<rect x="119.40" y="194" width="0.8" height="2.6" fill="#d6d6d6"/><rect x="119.40" y="216.4" width="0.8" height="2.6" fill="#d6d6d6"/>
<rect x="9" y="205" width="115" height="2.6" rx="1" fill="#e3e3e3"/>
<rect x="62.2" y="197.6" width="8.8" height="18" rx="1" fill="#ededed" stroke="#c3c3c3" stroke-width="0.8"/>
<polygon points="48,234 51.6,231.4 51.6,236.6" fill="#000"/>
<polygon points="51.4,234 55,231.4 55,236.6" fill="#000"/>
<rect x="63.2" y="231.2" width="7" height="2.2" fill="#000"/><rect x="63.2" y="234.8" width="7" height="2.2" fill="#000"/>
<polygon points="85.4,234 81.8,231.4 81.8,236.6" fill="#000"/>
<polygon points="82,234 78.4,231.4 78.4,236.6" fill="#000"/>
<g fill="#bdbdbd"><path d="M32.4 248.6 h2 v-1 h1.4 v1 h1.8 v-1 h1.4 v1 h1.8 v6.2 h-9.8 z"/><path d="M46.4 250.6 h4 l1 -1.6 h3.4 v1.6 h1.6 l-1.6 5.2 h-8.4 z"/><path d="M61.4 250.6 h4 l1.4 -2.4 h4 l-1 2.4 h1.4 l-1.6 5.2 h-8.2 z"/></g>
<rect x="77.4" y="247.2" width="9" height="9" fill="#9d9d9d"/><rect x="79" y="247.8" width="5.8" height="3.2" fill="#e9e9e9"/><rect x="79.4" y="252.8" width="5" height="3.4" fill="#dcdcdc"/>
<g fill="#a9a9a9"><rect x="93" y="247.6" width="8.4" height="2"/><rect x="93" y="250.8" width="3.6" height="5"/><rect x="97.8" y="250.8" width="3.6" height="5"/></g><rect x="94" y="252.6" width="1.6" height="1.4" fill="#e6e6e6"/><rect x="98.8" y="252.6" width="1.6" height="1.4" fill="#e6e6e6"/>
<rect x="20.1" y="311" width="3.2" height="61" fill="#e2e2e2"/>
<rect x="12.7" y="303.2" width="18" height="8.2" fill="#ececec" stroke="#c4c4c4" stroke-width="0.8"/>
<rect x="43.4" y="311" width="3.2" height="61" fill="#e2e2e2"/>
<rect x="36.0" y="303.2" width="18" height="8.2" fill="#ececec" stroke="#c4c4c4" stroke-width="0.8"/>
<rect x="66.7" y="311" width="3.2" height="61" fill="#e2e2e2"/>
<rect x="59.3" y="303.2" width="18" height="8.2" fill="#ececec" stroke="#c4c4c4" stroke-width="0.8"/>
<rect x="90.1" y="311" width="3.2" height="61" fill="#e2e2e2"/>
<rect x="82.7" y="303.2" width="18" height="8.2" fill="#ececec" stroke="#c4c4c4" stroke-width="0.8"/>
<polygon points="13.4,391.6 16.4,386 24,386 21,391.6" fill="#ffffff" stroke="#4a4a4a" stroke-width="0.7"/>
<polygon points="13.4,391.6 21,391.6 21,393.2 13.4,393.2" fill="#e8e8e8" stroke="#4a4a4a" stroke-width="0.6"/>
<polygon points="21,391.6 24,386 24,387.8 21,393.2" fill="#bdbdbd" stroke="#4a4a4a" stroke-width="0.6"/>
<path d="M39 390.4 l4.4 -5 l3.2 1.2 l0.6 2.8 l-2.4 1.6 l-1.4 -2 l-2.6 3.2 z" fill="#f0b428" stroke="#b9801a" stroke-width="0.5"/><path d="M38 393.6 l1.6 -3 l1.4 1.2 z" fill="#8a8a8a"/>
<rect x="63.4" y="384" width="3.6" height="9.6" rx="0.8" fill="#f3c524" stroke="#b38c14" stroke-width="0.6"/><path d="M65.2 385.4 v6.6" stroke="#fbe68a" stroke-width="0.8"/>
<path d="M84.4 384.8 h9.6 v3 h-1.4 v4.6 h-1.4 v1 h-4 v-1 h-1.4 v-4.6 h-1.4 z" fill="#5a5a5a"/><path d="M86.6 388 h5" stroke="#9a9a9a" stroke-width="0.6"/>
<rect x="8" y="647" width="6.6" height="6.4" fill="#fdfdfd" stroke="#8a8a8a" stroke-width="0.7"/><rect x="10.6" y="649.6" width="7.2" height="6.6" fill="#f9d466" stroke="#c69c2c" stroke-width="0.7"/>
<rect x="29.6" y="647.4" width="10" height="8.8" fill="#ffffff" stroke="#5c5c5c" stroke-width="0.8"/><path d="M31.6 649 v5.6" stroke="#e03030" stroke-width="0.9"/><path d="M33.4 649.6 h4.6 M34.6 651.6 h3.4 M34.6 653.6 h3.4" stroke="#7a7a8a" stroke-width="0.7"/>
<polygon points="51,650.4 54,647.6 61.4,647.6 58.4,650.4" fill="#f7dc84" stroke="#b8983a" stroke-width="0.5"/>
<polygon points="51,650.4 58.4,650.4 58.4,656 51,656" fill="#f9d35c" stroke="#b8983a" stroke-width="0.5"/>
<polygon points="58.4,650.4 61.4,647.6 61.4,653 58.4,656" fill="#8a8a7a" stroke="#6a6a5a" stroke-width="0.4"/>
<path d="M75.4 647 v9 M75.4 655.6 h2 M75.4 647.4 h2" stroke="#555" stroke-width="0.7" fill="none"/><rect x="77.8" y="647.4" width="2.4" height="3.4" fill="#f0c020"/><rect x="77.8" y="651" width="2.4" height="2.8" fill="#e03030"/><path d="M79 654 v3" stroke="#555" stroke-width="0.8"/>
<polygon points="94.4,647 94.4,651.4 97,649.2" fill="#e02a2a"/><rect x="98.4" y="646.6" width="1.8" height="6" fill="#f1c41e" stroke="#a8861a" stroke-width="0.3"/><rect x="100.8" y="646.6" width="1.8" height="6" fill="#f1c41e" stroke="#a8861a" stroke-width="0.3"/><path d="M94.6 653.4 h7.4 l2.8 -2 v3 l-2.8 2.4 h-7.4 z" fill="#fafafa" stroke="#777" stroke-width="0.6"/>
<rect x="118" y="649.6" width="5.6" height="5.4" fill="#d4d8de" stroke="#a5aab2" stroke-width="0.5"/><path d="M123.6 646.6 v10.4" stroke="#2aa0a0" stroke-width="1"/><path d="M117.6 652 h9.6" stroke="#2aa0a0" stroke-width="0.9"/><path d="M121.6 655 h5 M123.6 653 v4" stroke="#e02a2a" stroke-width="1"/>
<g transform="translate(0,1)">
<polygon points="954.2,691.6 960.6,691.6 960.6,698.0 954.2,698.0" fill="none" stroke="#7c7c7c" stroke-width="0.7"/>
<polygon points="951.6,693.4 958.0,693.4 958.0,699.8 951.6,699.8" fill="none" stroke="#7c7c7c" stroke-width="0.7"/>
<line x1="951.6" y1="693.4" x2="954.2" y2="691.6" stroke="#7c7c7c" stroke-width="0.7" />
<line x1="958.0" y1="693.4" x2="960.6" y2="691.6" stroke="#7c7c7c" stroke-width="0.7" />
<line x1="958.0" y1="699.8" x2="960.6" y2="698.0" stroke="#7c7c7c" stroke-width="0.7" />
<line x1="951.6" y1="699.8" x2="954.2" y2="698.0" stroke="#7c7c7c" stroke-width="0.7" />
<polygon points="951.6,693.4 954.2,691 960.6,691 958,693.4" fill="none" stroke="#d8232a" stroke-width="0.9"/>
<line x1="958" y1="693.6" x2="959.67" y2="694.06" stroke="#d8232a" stroke-width="0.9" />
<polygon points="961.6,694.6 959.35,695.22 959.99,692.91" fill="#d8232a"/>
<polygon points="966.0,691.6 972.4,691.6 972.4,698.0 966.0,698.0" fill="none" stroke="#7c7c7c" stroke-width="0.7"/>
<polygon points="963.4,693.4 969.8,693.4 969.8,699.8 963.4,699.8" fill="none" stroke="#7c7c7c" stroke-width="0.7"/>
<line x1="963.4" y1="693.4" x2="966.0" y2="691.6" stroke="#7c7c7c" stroke-width="0.7" />
<line x1="969.8" y1="693.4" x2="972.4" y2="691.6" stroke="#7c7c7c" stroke-width="0.7" />
<line x1="969.8" y1="699.8" x2="972.4" y2="698.0" stroke="#7c7c7c" stroke-width="0.7" />
<line x1="963.4" y1="699.8" x2="966.0" y2="698.0" stroke="#7c7c7c" stroke-width="0.7" />
<line x1="968.4" y1="700" x2="968.4" y2="691.8" stroke="#d8232a" stroke-width="0.9" />
<polygon points="968.4,689.6 969.72,691.8 967.08,691.8" fill="#d8232a"/>
<line x1="968.4" y1="700" x2="972.05" y2="697.97" stroke="#d8232a" stroke-width="0.9" />
<polygon points="973.8,697 972.63,699.02 971.47,696.92" fill="#d8232a"/>
<polygon points="979.6,690.2 986.0,690.2 986.0,696.6 979.6,696.6" fill="none" stroke="#7c7c7c" stroke-width="0.7"/>
<polygon points="977,692 983.4,692 983.4,698.4 977,698.4" fill="none" stroke="#7c7c7c" stroke-width="0.7"/>
<line x1="977" y1="692" x2="979.6" y2="690.2" stroke="#7c7c7c" stroke-width="0.7" />
<line x1="983.4" y1="692" x2="986.0" y2="690.2" stroke="#7c7c7c" stroke-width="0.7" />
<line x1="983.4" y1="698.4" x2="986.0" y2="696.6" stroke="#7c7c7c" stroke-width="0.7" />
<line x1="977" y1="698.4" x2="979.6" y2="696.6" stroke="#7c7c7c" stroke-width="0.7" />
<line x1="976" y1="700" x2="976.0" y2="691.8" stroke="#d8232a" stroke-width="0.9" />
<polygon points="976,689.6 977.32,691.8 974.68,691.8" fill="#d8232a"/>
<line x1="976" y1="700" x2="983.2" y2="700.0" stroke="#d8232a" stroke-width="0.9" />
<polygon points="985.4,700 983.2,701.32 983.2,698.68" fill="#d8232a"/>
<line x1="989.6" y1="696.6" x2="989.6" y2="691.6" stroke="#3146d8" stroke-width="0.9" />
<polygon points="989.6,689.4 990.92,691.6 988.28,691.6" fill="#3146d8"/>
<line x1="989.6" y1="696.6" x2="994.69" y2="693.69" stroke="#1fa12b" stroke-width="0.9" />
<polygon points="996.6,692.6 995.34,694.84 994.03,692.55" fill="#1fa12b"/>
<line x1="989.6" y1="696.6" x2="994.08" y2="699.12" stroke="#d8232a" stroke-width="0.9" />
<polygon points="996,700.2 993.44,700.27 994.73,697.97" fill="#d8232a"/>
<line x1="1004" y1="697.6" x2="1004.0" y2="691.6" stroke="#1fa12b" stroke-width="0.9" />
<polygon points="1004,689.4 1005.32,691.6 1002.68,691.6" fill="#1fa12b"/>
<line x1="1004" y1="697.6" x2="1000.92" y2="699.33" stroke="#3146d8" stroke-width="0.9" />
<polygon points="999,700.4 1000.27,698.17 1001.56,700.48" fill="#3146d8"/>
<line x1="1004" y1="697.6" x2="1007.45" y2="699.39" stroke="#d8232a" stroke-width="0.9" />
<polygon points="1009.4,700.4 1006.84,700.56 1008.05,698.22" fill="#d8232a"/>
<line x1="1016.4" y1="699.6" x2="1016.4" y2="691.8" stroke="#1fa12b" stroke-width="0.9" />
<polygon points="1016.4,689.6 1017.72,691.8 1015.08,691.8" fill="#1fa12b"/>
<line x1="1016.4" y1="699.6" x2="1012.98" y2="697.95" stroke="#d8232a" stroke-width="0.9" />
<polygon points="1011,697 1013.55,696.77 1012.41,699.14" fill="#d8232a"/>
<line x1="1016.4" y1="699.6" x2="1020.0" y2="697.93" stroke="#3146d8" stroke-width="0.9" />
<polygon points="1022,697 1020.56,699.12 1019.45,696.73" fill="#3146d8"/>
<polygon points="1024.0,692.8 1030.4,692.8 1030.4,699.2 1024.0,699.2" fill="#fcc41c"/>
<polygon points="1026.6,691.0 1033.0,691.0 1033.0,697.4 1026.6,697.4" fill="none" stroke="#7c7c7c" stroke-width="0.7"/>
<polygon points="1024.0,692.8 1030.4,692.8 1030.4,699.2 1024.0,699.2" fill="none" stroke="#7c7c7c" stroke-width="0.7"/>
<line x1="1024.0" y1="692.8" x2="1026.6" y2="691.0" stroke="#7c7c7c" stroke-width="0.7" />
<line x1="1030.4" y1="692.8" x2="1033.0" y2="691.0" stroke="#7c7c7c" stroke-width="0.7" />
<line x1="1030.4" y1="699.1999999999999" x2="1033.0" y2="697.4" stroke="#7c7c7c" stroke-width="0.7" />
<line x1="1024.0" y1="699.1999999999999" x2="1026.6" y2="697.4" stroke="#7c7c7c" stroke-width="0.7" />
<polygon points="1038.5,691.0 1044.9,691.0 1044.9,697.4 1038.5,697.4" fill="#fcc41c"/>
<polygon points="1038.5,691.0 1044.9,691.0 1044.9,697.4 1038.5,697.4" fill="none" stroke="#7c7c7c" stroke-width="0.7"/>
<polygon points="1035.9,692.8 1042.3,692.8 1042.3,699.2 1035.9,699.2" fill="none" stroke="#7c7c7c" stroke-width="0.7"/>
<line x1="1035.9" y1="692.8" x2="1038.5" y2="691.0" stroke="#7c7c7c" stroke-width="0.7" />
<line x1="1042.3000000000002" y1="692.8" x2="1044.9" y2="691.0" stroke="#7c7c7c" stroke-width="0.7" />
<line x1="1042.3000000000002" y1="699.1999999999999" x2="1044.9" y2="697.4" stroke="#7c7c7c" stroke-width="0.7" />
<line x1="1035.9" y1="699.1999999999999" x2="1038.5" y2="697.4" stroke="#7c7c7c" stroke-width="0.7" />
<polygon points="1047.8,692.8 1050.4,691.0 1050.4,697.4 1047.8,699.2" fill="#fcc41c"/>
<polygon points="1050.4,691.0 1056.8,691.0 1056.8,697.4 1050.4,697.4" fill="none" stroke="#7c7c7c" stroke-width="0.7"/>
<polygon points="1047.8,692.8 1054.2,692.8 1054.2,699.2 1047.8,699.2" fill="none" stroke="#7c7c7c" stroke-width="0.7"/>
<line x1="1047.8" y1="692.8" x2="1050.4" y2="691.0" stroke="#7c7c7c" stroke-width="0.7" />
<line x1="1054.2" y1="692.8" x2="1056.8" y2="691.0" stroke="#7c7c7c" stroke-width="0.7" />
<line x1="1054.2" y1="699.1999999999999" x2="1056.8" y2="697.4" stroke="#7c7c7c" stroke-width="0.7" />
<line x1="1047.8" y1="699.1999999999999" x2="1050.4" y2="697.4" stroke="#7c7c7c" stroke-width="0.7" />
<polygon points="1066.1,692.8 1068.7,691.0 1068.7,697.4 1066.1,699.2" fill="#fcc41c"/>
<polygon points="1062.3,691.0 1068.7,691.0 1068.7,697.4 1062.3,697.4" fill="none" stroke="#7c7c7c" stroke-width="0.7"/>
<polygon points="1059.7,692.8 1066.1,692.8 1066.1,699.2 1059.7,699.2" fill="none" stroke="#7c7c7c" stroke-width="0.7"/>
<line x1="1059.7" y1="692.8" x2="1062.3" y2="691.0" stroke="#7c7c7c" stroke-width="0.7" />
<line x1="1066.1000000000001" y1="692.8" x2="1068.7" y2="691.0" stroke="#7c7c7c" stroke-width="0.7" />
<line x1="1066.1000000000001" y1="699.1999999999999" x2="1068.7" y2="697.4" stroke="#7c7c7c" stroke-width="0.7" />
<line x1="1059.7" y1="699.1999999999999" x2="1062.3" y2="697.4" stroke="#7c7c7c" stroke-width="0.7" />
<polygon points="1071.6,692.8 1078.0,692.8 1080.6,691.0 1074.2,691.0" fill="#fcc41c"/>
<polygon points="1074.2,691.0 1080.6,691.0 1080.6,697.4 1074.2,697.4" fill="none" stroke="#7c7c7c" stroke-width="0.7"/>
<polygon points="1071.6,692.8 1078.0,692.8 1078.0,699.2 1071.6,699.2" fill="none" stroke="#7c7c7c" stroke-width="0.7"/>
<line x1="1071.6" y1="692.8" x2="1074.2" y2="691.0" stroke="#7c7c7c" stroke-width="0.7" />
<line x1="1078.0" y1="692.8" x2="1080.6" y2="691.0" stroke="#7c7c7c" stroke-width="0.7" />
<line x1="1078.0" y1="699.1999999999999" x2="1080.6" y2="697.4" stroke="#7c7c7c" stroke-width="0.7" />
<line x1="1071.6" y1="699.1999999999999" x2="1074.2" y2="697.4" stroke="#7c7c7c" stroke-width="0.7" />
<polygon points="1083.5,699.2 1089.9,699.2 1092.5,697.4 1086.1,697.4" fill="#fcc41c"/>
<polygon points="1086.1,691.0 1092.5,691.0 1092.5,697.4 1086.1,697.4" fill="none" stroke="#7c7c7c" stroke-width="0.7"/>
<polygon points="1083.5,692.8 1089.9,692.8 1089.9,699.2 1083.5,699.2" fill="none" stroke="#7c7c7c" stroke-width="0.7"/>
<line x1="1083.5" y1="692.8" x2="1086.1" y2="691.0" stroke="#7c7c7c" stroke-width="0.7" />
<line x1="1089.9" y1="692.8" x2="1092.5" y2="691.0" stroke="#7c7c7c" stroke-width="0.7" />
<line x1="1089.9" y1="699.1999999999999" x2="1092.5" y2="697.4" stroke="#7c7c7c" stroke-width="0.7" />
<line x1="1083.5" y1="699.1999999999999" x2="1086.1" y2="697.4" stroke="#7c7c7c" stroke-width="0.7" />
<polygon points="1098.0,691.0 1104.4,691.0 1104.4,697.4 1098.0,697.4" fill="none" stroke="#7c7c7c" stroke-width="0.7"/>
<polygon points="1095.4,692.8 1101.8,692.8 1101.8,699.2 1095.4,699.2" fill="none" stroke="#7c7c7c" stroke-width="0.7"/>
<line x1="1095.4" y1="692.8" x2="1098.0" y2="691.0" stroke="#7c7c7c" stroke-width="0.7" />
<line x1="1101.8000000000002" y1="692.8" x2="1104.4" y2="691.0" stroke="#7c7c7c" stroke-width="0.7" />
<line x1="1101.8000000000002" y1="699.1999999999999" x2="1104.4" y2="697.4" stroke="#7c7c7c" stroke-width="0.7" />
<line x1="1095.4" y1="699.1999999999999" x2="1098.0" y2="697.4" stroke="#7c7c7c" stroke-width="0.7" />
<polygon points="1108,698.4 1112.6,696.6 1117.4,698.4 1112.6,700.4" fill="#f5c01e" stroke="#b8901a" stroke-width="0.5"/>
<line x1="1112.6" y1="698" x2="1112.6" y2="692.2" stroke="#d8232a" stroke-width="1" />
<polygon points="1112.6,689.8 1114.04,692.2 1111.16,692.2" fill="#d8232a"/>
<rect x="1120.8" y="691.4" width="7.4" height="7.4" fill="#fdd651" stroke="#e2aa26" stroke-width="0.9"/>
</g>
</svg>
<!--/ICONS-->
</body>
</html>
